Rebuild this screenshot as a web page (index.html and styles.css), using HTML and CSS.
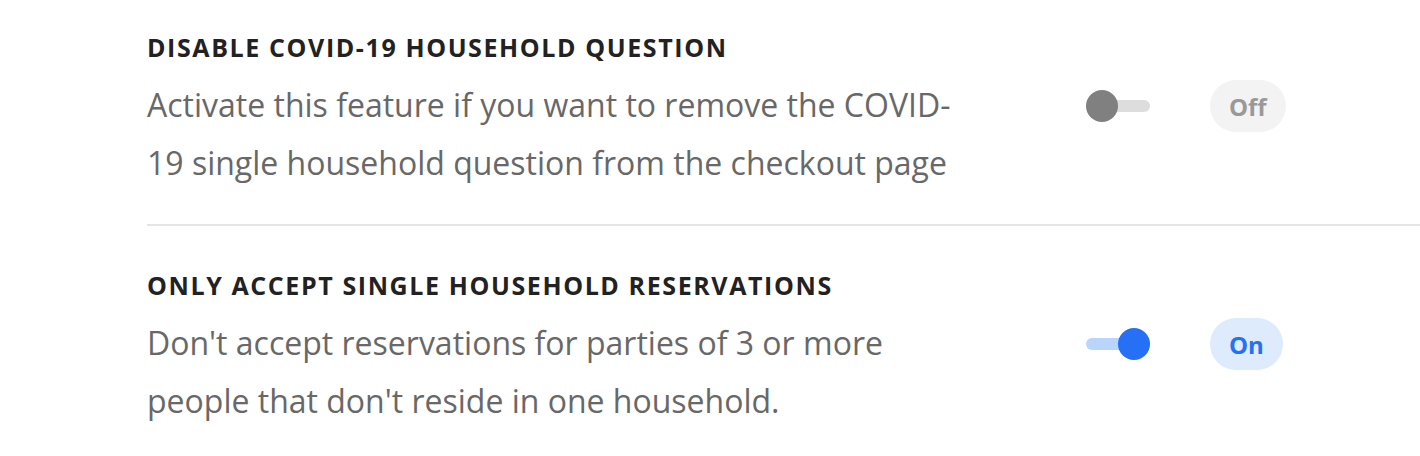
FILE: index.html
```html
<!DOCTYPE html>
<html>
<head>
<meta charset="utf-8">
<link rel="stylesheet" href="styles.css">
</head>
<body>
<div class="settings">
  <div class="setting first">
    <div class="text">
      <div class="title">DISABLE COVID-19 HOUSEHOLD QUESTION</div>
      <div class="desc">Activate this feature if you want to remove the COVID-19 single household question from the checkout page</div>
    </div>
    <div class="controls">
      <div class="toggle off"><span class="track"></span><span class="knob"></span></div>
      <div class="pill off">Off</div>
    </div>
  </div>
  <div class="setting">
    <div class="text">
      <div class="title">ONLY ACCEPT SINGLE HOUSEHOLD RESERVATIONS</div>
      <div class="desc">Don't accept reservations for parties of 3 or more people that don't reside in one household.</div>
    </div>
    <div class="controls">
      <div class="toggle on"><span class="track"></span><span class="knob"></span></div>
      <div class="pill on">On</div>
    </div>
  </div>
</div>
</body>
</html>
```

FILE: styles.css
```css
* { box-sizing: border-box; }
html, body { margin: 0; padding: 0; background: #fff; }
body { font-family: "Open Sans", "Liberation Sans", sans-serif; }

.settings { padding-left: 147px; }

.setting {
  display: flex;
  align-items: flex-start;
  padding: 44px 0 32px;
}
.setting.first {
  padding-top: 32px;
  border-bottom: 2px solid #e5e5e5;
}

.text { width: 815px; }

.title {
  font-size: 25px;
  line-height: 30px;
  font-weight: 700;
  letter-spacing: 1.6px;
  color: #222;
}

.desc {
  margin-top: 14px;
  font-size: 32px;
  line-height: 58px;
  color: #686868;
}

.controls {
  display: flex;
  align-items: center;
  margin-left: 124px;
  margin-top: 48px;
  gap: 60px;
}

.toggle {
  position: relative;
  width: 64px;
  height: 32px;
  display: flex;
  align-items: center;
}
.toggle .track {
  display: block;
  width: 64px;
  height: 12px;
  border-radius: 6px;
  background: #dddddd;
}
.toggle .knob {
  position: absolute;
  top: 0;
  left: 0;
  width: 32px;
  height: 32px;
  border-radius: 50%;
  background: #808080;
}
.toggle.on .track { background: #b9d5fb; }
.toggle.on .knob { left: 32px; background: #2670f5; }

.pill {
  height: 52px;
  border-radius: 26px;
  padding: 0 19px;
  display: flex;
  align-items: center;
  font-size: 24px;
  font-weight: 700;
}
.pill.off { background: #f3f3f3; color: #999; }
.pill.on { background: #ddebfd; color: #2670f5; }
```
